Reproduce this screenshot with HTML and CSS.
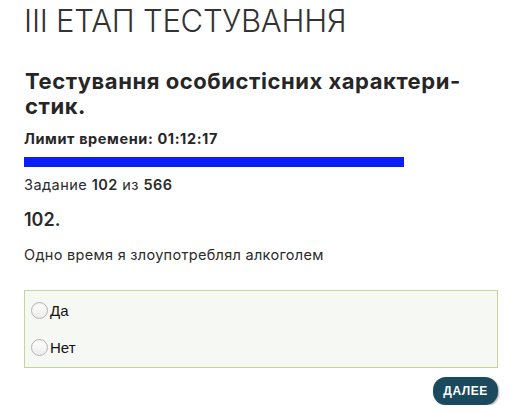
FILE: index.html
```html
<!DOCTYPE html>
<html lang="uk">
<head>
<meta charset="utf-8">
<title>III ЕТАП ТЕСТУВАННЯ</title>
<link rel="stylesheet" href="styles.css">
</head>
<body>
<main class="page">
  <h1 class="stage-title">III ЕТАП ТЕСТУВАННЯ</h1>
  <h2 class="test-title">Тестування особистісних характери-<br>стик.</h2>
  <div class="timer">Лимит времени: 01:12:17</div>
  <div class="progress"><div class="progress-fill" style="width: 380px"></div></div>
  <div class="counter">Задание <b>102</b> из <b>566</b></div>
  <div class="q-number">102.</div>
  <p class="q-text">Одно время я злоупотреблял алкоголем</p>
  <form class="answers">
    <label class="answer"><input type="radio" name="a" class="radio"><span>Да</span></label>
    <label class="answer"><input type="radio" name="a" class="radio"><span>Нет</span></label>
  </form>
  <div class="actions">
    <button class="next-btn" type="button">ДАЛЕЕ</button>
  </div>
</main>
</body>
</html>
```

FILE: styles.css
```css
html, body {
  margin: 0;
  padding: 0;
  background: #ffffff;
}

body {
  font-family: "Inter", "Liberation Sans", Arial, sans-serif;
  color: #2b2b2b;
}

.page {
  padding: 3px 13px 0 24px;
  display: flex;
  flex-direction: column;
}

.stage-title {
  margin: 0;
  font-family: "Inter", "Liberation Sans", sans-serif;
  font-weight: 300;
  font-size: 31px;
  line-height: 36px;
  letter-spacing: -0.25px;
  color: #333;
}

.test-title {
  margin: 30px 0 0 1px;
  font-size: 22px;
  line-height: 25px;
  font-weight: 700;
  letter-spacing: 0.55px;
  color: #262626;
}

.timer {
  margin-top: 12px;
  font-size: 14.5px;
  line-height: 16px;
  font-weight: 700;
  letter-spacing: 0.6px;
  color: #262626;
}

.progress {
  margin-top: 10px;
  height: 10px;
  width: 100%;
}

.progress-fill {
  height: 100%;
  background: #0b1ef7;
}

.counter {
  margin-top: 10px;
  font-size: 14.5px;
  line-height: 16px;
  letter-spacing: 0.45px;
}

.counter b {
  font-weight: 600;
}

.q-number {
  margin-top: 17px;
  font-size: 18px;
  line-height: 20px;
  font-weight: 600;
}

.q-text {
  margin: 17px 0 0;
  font-size: 14.5px;
  line-height: 16px;
  letter-spacing: 0.3px;
}

.answers {
  margin-top: 27px;
  border: 1px solid #c6d59d;
  background: #f6f8f3;
  padding: 1px 0 1px 6px;
  display: flex;
  flex-direction: column;
}

.answer {
  height: 37px;
  display: flex;
  align-items: center;
  gap: 2px;
  font-family: "Liberation Sans", Arial, sans-serif;
  font-size: 15px;
  color: #111;
}

.radio {
  appearance: none;
  -webkit-appearance: none;
  margin: 0;
  width: 17px;
  height: 17px;
  border-radius: 50%;
  border: 1px solid #b4b4b4;
  background: linear-gradient(#ffffff, #ededed);
  box-shadow: inset 0 1px 1px rgba(0,0,0,0.05);
}

.actions {
  display: flex;
  justify-content: flex-end;
  margin-top: 9px;
}

.next-btn {
  width: 65px;
  height: 28px;
  border: 0;
  border-radius: 13px;
  background: #1b4a5e;
  color: #fff;
  font-family: "Liberation Sans", Arial, sans-serif;
  font-weight: bold;
  font-size: 12px;
  letter-spacing: 0.5px;
  padding: 0;
  box-shadow: 1px 1px 2px rgba(0,0,0,0.35);
}
```
